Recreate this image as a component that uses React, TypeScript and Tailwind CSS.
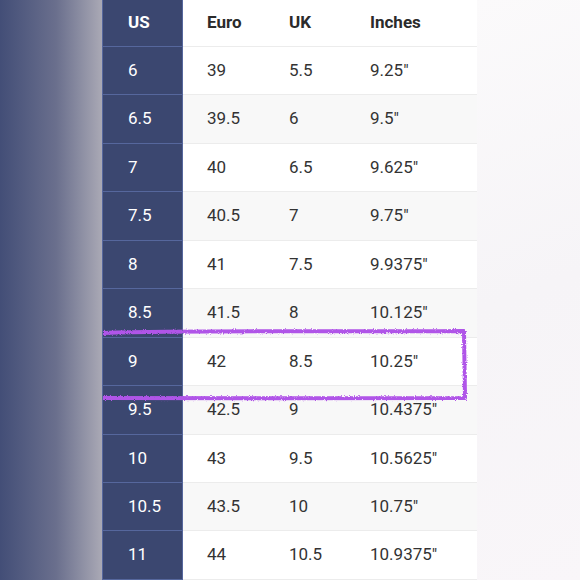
import React from "react";

const rows = [
  ["6", "39", "5.5", '9.25"'],
  ["6.5", "39.5", "6", '9.5"'],
  ["7", "40", "6.5", '9.625"'],
  ["7.5", "40.5", "7", '9.75"'],
  ["8", "41", "7.5", '9.9375"'],
  ["8.5", "41.5", "8", '10.125"'],
  ["9", "42", "8.5", '10.25"'],
  ["9.5", "42.5", "9", '10.4375"'],
  ["10", "43", "9.5", '10.5625"'],
  ["10.5", "43.5", "10", '10.75"'],
  ["11", "44", "10.5", '10.9375"'],
];

const SizeChart = () => {
  return (
    <div
      className="relative flex w-[580px] h-[580px] overflow-hidden"
      style={{ fontFamily: "Roboto, 'Liberation Sans', sans-serif" }}
    >
      {/* blurred left edge */}
      <div className="w-[102px] h-full bg-linear-to-r from-[#434e77] via-[#6a6f8d] via-55% to-[#aaa9b5]" />

      {/* table */}
      <div className="w-[375px] flex flex-col bg-white">
        <div className="flex h-[47px] text-[17px] font-bold text-[#2b2b2b]">
          <div className="w-[81px] bg-[#3b4770] text-white pl-[25px] flex items-center border-x border-b border-[#56679d]">
            US
          </div>
          <div className="flex-1 flex border-b border-[#ececec]">
            <div className="w-[82px] pl-6 flex items-center">Euro</div>
            <div className="w-[81px] pl-6 flex items-center">UK</div>
            <div className="flex-1 pl-6 flex items-center">Inches</div>
          </div>
        </div>
        {rows.map((r, i) => (
          <div key={i} className="flex h-[48.5px] text-[17px] text-[#333]">
            <div className="w-[81px] bg-[#3b4770] text-white pl-[25px] flex items-center border-x border-b border-[#56679d]">
              {r[0]}
            </div>
            <div
              className={`flex-1 flex border-b border-[#ececec] ${
                i % 2 === 1 ? "bg-[#f8f8f8]" : "bg-white"
              }`}
            >
              <div className="w-[82px] pl-6 flex items-center">{r[1]}</div>
              <div className="w-[81px] pl-6 flex items-center">{r[2]}</div>
              <div className="flex-1 pl-6 flex items-center">{r[3]}</div>
            </div>
          </div>
        ))}
      </div>

      {/* blurred right side */}
      <div className="flex-1 h-full bg-linear-160 from-[#fbfafb] via-[#f6f4f7] to-[#f9f6f9]" />

      {/* hand-drawn highlight */}
      <svg
        className="absolute left-0 top-0 pointer-events-none"
        width="580"
        height="580"
        viewBox="0 0 580 580"
      >
        <defs>
          <filter id="rough" x="-5%" y="-20%" width="110%" height="140%">
            <feTurbulence type="fractalNoise" baseFrequency="0.9" numOctaves="2" seed="3" />
            <feDisplacementMap in="SourceGraphic" scale="3" />
          </filter>
        </defs>
        <path
          d="M103 333 C200 330 300 332 464 331 L465 398 C350 399 220 398 103 398"
          fill="none"
          stroke="#b055e8"
          strokeWidth="4"
          strokeLinejoin="round"
          filter="url(#rough)"
        />
      </svg>
    </div>
  );
};

export default function App() {
  return <SizeChart />;
}
